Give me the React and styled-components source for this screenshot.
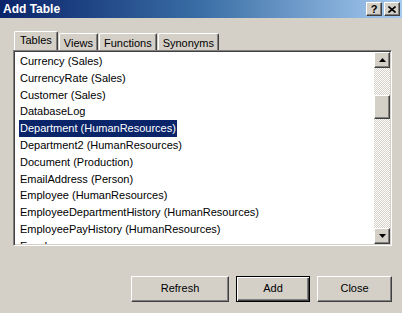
import React from "react";
import styled, { createGlobalStyle, css } from "styled-components";

const Global = createGlobalStyle`
  html, body {
    margin: 0;
    padding: 0;
    background: #d4d0c8;
  }
  body {
    font-family: "Liberation Sans", Arial, sans-serif;
    font-size: 11px;
  }
`;

const raised = css`
  border: 1px solid;
  border-color: #ffffff #404040 #404040 #ffffff;
  box-shadow: inset -1px -1px #808080, inset 1px 1px #d4d0c8;
  background: #d4d0c8;
`;

const Window = styled.div`
  width: 402px;
  height: 313px;
  display: flex;
  flex-direction: column;
  background: #d4d0c8;
  overflow: hidden;
`;

const TitleBar = styled.div`
  height: 18px;
  flex: none;
  display: flex;
  align-items: center;
  justify-content: space-between;
  padding: 0 2px 0 3px;
  background: linear-gradient(to right, #0a246a 0%, #3a6ea5 50%, #a6caf0 100%);
`;

const Title = styled.span`
  color: #ffffff;
  font-weight: bold;
  font-size: 12px;
`;

const TitleButtons = styled.div`
  display: flex;
  gap: 2px;
`;

const TitleButton = styled.div`
  ${raised};
  box-sizing: border-box;
  width: 16px;
  height: 14px;
  display: flex;
  align-items: center;
  justify-content: center;
  font-weight: bold;
  font-size: 11px;
  color: #000;
`;

const Body = styled.div`
  flex: 1;
  display: flex;
  flex-direction: column;
  padding: 13px 10px 0 13px;
`;

const TabRow = styled.div`
  display: flex;
  align-items: flex-end;
  gap: 1px;
  height: 19px;
  padding-left: 1px;
`;

const Tab = styled.div`
  box-sizing: border-box;
  height: ${(p) => (p.$active ? 19 : 17)}px;
  padding: ${(p) => (p.$active ? "2px 5px 0" : "3px 4px 0")};
  border: 1px solid;
  border-bottom: none;
  border-color: #ffffff #404040 transparent #ffffff;
  border-radius: 2px 2px 0 0;
  box-shadow: inset -1px 0 #808080;
  color: #000;
  line-height: 13px;
  white-space: nowrap;
`;

const ListBox = styled.div`
  box-sizing: border-box;
  height: 196px;
  display: flex;
  border: 1px solid;
  border-color: #808080 #ffffff #ffffff #808080;
  box-shadow: inset 1px 1px #404040, inset -1px -1px #d4d0c8;
  background: #ffffff;
  padding: 1px;
  overflow: hidden;
`;

const Items = styled.div`
  flex: 1;
  padding: 1px 0 0 4px;
  overflow: hidden;
`;

const Row = styled.div`
  height: 16.8px;
  line-height: 16.8px;
  white-space: nowrap;
`;

const Label = styled.span`
  display: inline-block;
  padding: 0 1px;
  color: ${(p) => (p.$selected ? "#ffffff" : "#000000")};
  background: ${(p) => (p.$selected ? "#0a246a" : "transparent")};
`;

const ScrollBar = styled.div`
  width: 16px;
  flex: none;
  display: flex;
  flex-direction: column;
  background: repeating-conic-gradient(#d4d0c8 0 25%, #ffffff 0 50%) 0 0 / 2px 2px;
`;

const ScrollButton = styled.div`
  ${raised};
  box-sizing: border-box;
  height: 16px;
  flex: none;
  display: flex;
  align-items: center;
  justify-content: center;
`;

const Track = styled.div`
  flex: 1;
  padding-top: 27px;
`;

const Thumb = styled.div`
  ${raised};
  box-sizing: border-box;
  height: 24px;
`;

const Footer = styled.div`
  display: flex;
  justify-content: flex-end;
  gap: 7px;
  margin-top: 30px;
`;

const Button = styled.button`
  box-sizing: border-box;
  width: ${(p) => p.$w}px;
  height: 26px;
  font-family: "Liberation Sans", Arial, sans-serif;
  font-size: 11px;
  color: #000;
  padding: 0 0 2px;
  ${raised};
  ${(p) =>
    p.$default &&
    css`
      border: 1px solid #000;
      box-shadow: inset 1px 1px #ffffff, inset -1px -1px #404040,
        inset -2px -2px #808080;
    `}
`;

const Arrow = ({ down }) => (
  <svg width="7" height="4" viewBox="0 0 7 4">
    <path d={down ? "M0 0H7L3.5 4Z" : "M0 4H7L3.5 0Z"} fill="#000" />
  </svg>
);

const tables = [
  "Currency (Sales)",
  "CurrencyRate (Sales)",
  "Customer (Sales)",
  "DatabaseLog",
  "Department (HumanResources)",
  "Department2 (HumanResources)",
  "Document (Production)",
  "EmailAddress (Person)",
  "Employee (HumanResources)",
  "EmployeeDepartmentHistory (HumanResources)",
  "EmployeePayHistory (HumanResources)",
  "ErrorLog",
];

export default function App() {
  return (
    <Window>
      <Global />
      <TitleBar>
        <Title>Add Table</Title>
        <TitleButtons>
          <TitleButton>?</TitleButton>
          <TitleButton>
            <svg width="8" height="7" viewBox="0 0 8 7">
              <path d="M0.5 0.5L7.5 6.5M7.5 0.5L0.5 6.5" stroke="#000" strokeWidth="1.6" />
            </svg>
          </TitleButton>
        </TitleButtons>
      </TitleBar>
      <Body>
        <TabRow>
          <Tab $active>Tables</Tab>
          <Tab>Views</Tab>
          <Tab>Functions</Tab>
          <Tab>Synonyms</Tab>
        </TabRow>
        <ListBox>
          <Items>
            {tables.map((t) => (
              <Row key={t}>
                <Label $selected={t === "Department (HumanResources)"}>{t}</Label>
              </Row>
            ))}
          </Items>
          <ScrollBar>
            <ScrollButton>
              <Arrow />
            </ScrollButton>
            <Track>
              <Thumb />
            </Track>
            <ScrollButton>
              <Arrow down />
            </ScrollButton>
          </ScrollBar>
        </ListBox>
        <Footer>
          <Button $w={98}>Refresh</Button>
          <Button $w={74} $default>
            Add
          </Button>
          <Button $w={75}>Close</Button>
        </Footer>
      </Body>
    </Window>
  );
}
